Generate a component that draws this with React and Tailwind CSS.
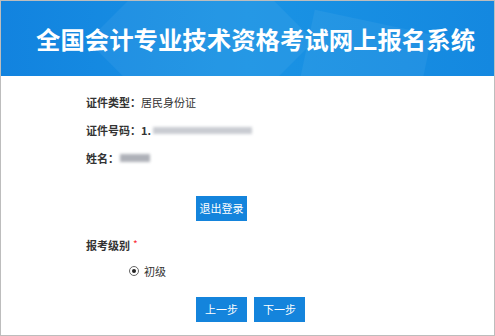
import React from 'react';

const font = "font-['Microsoft_YaHei','Noto_Sans_CJK_SC',sans-serif]";

const Btn = ({ children }) => (
  <button className="flex h-[25px] w-[51px] items-center justify-center bg-[#1484dc] text-[11px] text-white">
    {children}
  </button>
);

const App = () => {
  return (
    <div className={`h-[336px] w-[495px] overflow-hidden border border-[#bdbdbd] bg-white ${font}`}>
      <div className="relative flex h-[75px] items-center overflow-hidden bg-gradient-to-r from-[#1283df] via-[#1a93e4] to-[#1488e0] pl-[35px]">
        <div className="absolute left-[120px] top-[-40px] h-[160px] w-[160px] rotate-45 bg-white/5" />
        <div className="absolute left-[300px] top-[20px] h-[120px] w-[120px] rotate-12 bg-white/5" />
        <h1 className="relative whitespace-nowrap pt-[1px] text-[24.4px] font-bold leading-none text-white">
          全国会计专业技术资格考试网上报名系统
        </h1>
      </div>

      <div className="whitespace-nowrap pl-[85px] pt-[19px] text-[11px] text-[#333]">
        <div className="flex h-[14px] items-center">
          <span className="w-[55px] shrink-0 font-bold">证件类型：</span>
          <span>居民身份证</span>
        </div>
        <div className="mt-[14px] flex h-[14px] items-center">
          <span className="w-[55px] shrink-0 font-bold">证件号码：</span>
          <span className="font-bold">1.</span>
          <span className="ml-[2px] h-[7px] w-[99px] bg-[#c9ccd2] blur-[1.5px]" />
        </div>
        <div className="mt-[14px] flex h-[14px] items-center">
          <span className="w-[34px] shrink-0 font-bold">姓名：</span>
          <span className="h-[8px] w-[30px] bg-[#aeb1b8] blur-[1.5px]" />
        </div>

        <div className="mt-[31px] pl-[110px]">
          <Btn>退出登录</Btn>
        </div>

        <div className="mt-[17px] flex h-[14px] items-center">
          <span className="font-bold">报考级别</span>
          <span className="ml-[3px] -mt-[4px] text-[10px] text-red-500">*</span>
        </div>
        <div className="mt-[11px] flex items-center pl-[43px]">
          <span className="flex h-[10px] w-[10px] items-center justify-center rounded-full border border-[#666] bg-white">
            <span className="h-[4px] w-[4px] rounded-full bg-[#222]" />
          </span>
          <span className="ml-[5px]">初级</span>
        </div>

        <div className="mt-[17px] flex gap-[7px] pl-[110px]">
          <Btn>上一步</Btn>
          <Btn>下一步</Btn>
        </div>
      </div>
    </div>
  );
};

export default App;
